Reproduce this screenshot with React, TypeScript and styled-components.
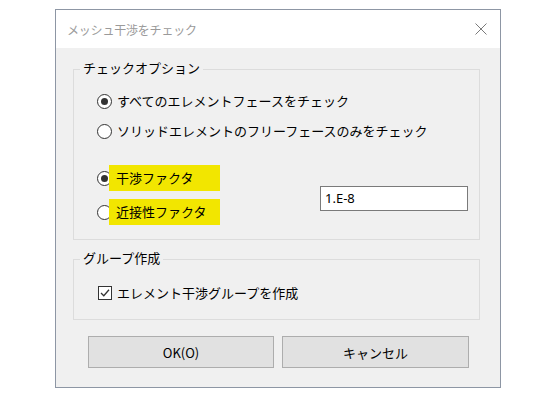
import styled, { createGlobalStyle } from 'styled-components';

const GlobalStyle = createGlobalStyle`
  html, body {
    margin: 0;
    padding: 0;
    background: #fff;
  }
  body {
    font-family: 'Noto Sans CJK JP', 'Noto Sans', sans-serif;
    font-size: 13px;
    color: #000;
  }
`;

export default function App() {
  return (
    <>
      <GlobalStyle />
      <Page>
        <Dialog>
          <TitleBar>
            <Title>メッシュ干渉をチェック</Title>
            <CloseButton aria-label="close">
              <svg width="12" height="12" viewBox="0 0 12 12">
                <path d="M0.5 0.5 L11.5 11.5 M11.5 0.5 L0.5 11.5" stroke="#7a7a7a" strokeWidth="1" />
              </svg>
            </CloseButton>
          </TitleBar>
          <Body>
            <GroupBox>
              <Caption>チェックオプション</Caption>
              <OptionList>
                <OptionRow>
                  <Radio $checked />
                  <OptionText>すべてのエレメントフェースをチェック</OptionText>
                </OptionRow>
                <OptionRow>
                  <Radio />
                  <OptionText>ソリッドエレメントのフリーフェースのみをチェック</OptionText>
                </OptionRow>
              </OptionList>
              <FactorSection>
                <FactorList>
                  <FactorRow>
                    <Radio $checked />
                    <Highlight>干渉ファクタ</Highlight>
                  </FactorRow>
                  <FactorRow>
                    <Radio />
                    <Highlight>近接性ファクタ</Highlight>
                  </FactorRow>
                </FactorList>
                <ValueInput defaultValue="1.E-8" />
              </FactorSection>
            </GroupBox>
            <GroupBox $second>
              <Caption>グループ作成</Caption>
              <CheckRow>
                <CheckBox>
                  <svg width="12" height="12" viewBox="0 0 12 12">
                    <path d="M2 6 L4.8 8.8 L10 2.8" stroke="#333" strokeWidth="1.3" fill="none" />
                  </svg>
                </CheckBox>
                <OptionText>エレメント干渉グループを作成</OptionText>
              </CheckRow>
            </GroupBox>
            <ButtonBar>
              <DialogButton $width={186}>OK(O)</DialogButton>
              <DialogButton $width={187}>キャンセル</DialogButton>
            </ButtonBar>
          </Body>
        </Dialog>
      </Page>
    </>
  );
}

const Page = styled.div`
  padding: 9px 0 0 55px;
`;

const Dialog = styled.div`
  width: 446px;
  height: 379px;
  box-sizing: border-box;
  border: 1px solid #8d96a4;
  display: flex;
  flex-direction: column;
  background: #f0f0f0;
`;

const TitleBar = styled.div`
  height: 38px;
  background: #fff;
  display: flex;
  align-items: center;
  justify-content: space-between;
  padding: 0 13px 0 11px;
`;

const Title = styled.div`
  font-size: 12px;
  color: #9a9a9a;
  letter-spacing: -0.2px;
`;

const CloseButton = styled.div`
  width: 12px;
  height: 12px;
  display: flex;
  svg {
    display: block;
  }
`;

const Body = styled.div`
  flex: 1;
  display: flex;
  flex-direction: column;
  padding-top: 21px;
`;

const GroupBox = styled.div<{ $second?: boolean }>`
  margin: ${({ $second }) => ($second ? '19px' : '0')} 20px 0 17px;
  border: 1px solid #dcdcdc;
  display: flex;
  flex-direction: column;
  padding-bottom: 14px;
`;

const Caption = styled.div`
  align-self: flex-start;
  margin: -11px 0 0 6px;
  padding: 0 3px;
  line-height: 18px;
  background: #f0f0f0;
`;

const OptionList = styled.div`
  display: flex;
  flex-direction: column;
  gap: 6px;
  padding: 12px 0 0 23px;
`;

const OptionRow = styled.div`
  height: 24px;
  display: flex;
  align-items: center;
`;

const Radio = styled.span<{ $checked?: boolean }>`
  flex: none;
  width: 15px;
  height: 15px;
  box-sizing: border-box;
  border: 1px solid #333;
  border-radius: 50%;
  background: #fff;
  display: flex;
  align-items: center;
  justify-content: center;
  &::after {
    content: '';
    width: 7px;
    height: 7px;
    border-radius: 50%;
    background: ${({ $checked }) => ($checked ? '#333' : 'transparent')};
  }
`;

const OptionText = styled.span`
  margin-left: 5px;
  line-height: 18px;
  white-space: nowrap;
`;

const FactorSection = styled.div`
  display: flex;
  align-items: center;
  justify-content: space-between;
  padding: 22px 11px 0 23px;
`;

const FactorList = styled.div`
  display: flex;
  flex-direction: column;
  gap: 8px;
`;

const FactorRow = styled.div`
  height: 26px;
  display: flex;
  align-items: center;
`;

const Highlight = styled.span`
  position: relative;
  margin-left: -3px;
  padding: 0 7px;
  width: 97px;
  height: 26px;
  line-height: 26px;
  background: #f2e600;
  white-space: nowrap;
`;

const ValueInput = styled.input`
  width: 148px;
  height: 25px;
  box-sizing: border-box;
  border: 1px solid #7a7a7a;
  background: #fff;
  padding: 0 4px;
  margin-top: 6px;
  font-family: 'Noto Sans', 'Liberation Sans', sans-serif;
  font-size: 13px;
  color: #000;
  outline: none;
`;

const CheckRow = styled.div`
  height: 24px;
  display: flex;
  align-items: center;
  padding: 14px 0 0 24px;
`;

const CheckBox = styled.span`
  flex: none;
  width: 14px;
  height: 14px;
  box-sizing: border-box;
  border: 1px solid #333;
  background: #fff;
  display: flex;
  align-items: center;
  justify-content: center;
  svg {
    display: block;
  }
`;

const ButtonBar = styled.div`
  display: flex;
  gap: 8px;
  padding: 16px 0 0 32px;
`;

const DialogButton = styled.button<{ $width: number }>`
  width: ${({ $width }) => $width}px;
  height: 32px;
  box-sizing: border-box;
  border: 1px solid #adadad;
  background: #e1e1e1;
  font-family: 'Noto Sans CJK JP', 'Noto Sans', sans-serif;
  font-size: 13px;
  color: #000;
  padding: 0;
`;
